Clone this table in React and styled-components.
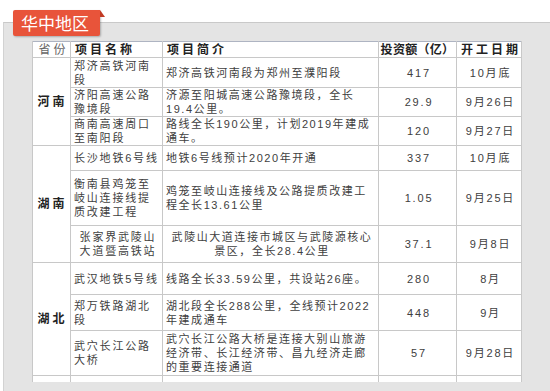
import React from 'react';
import styled, { createGlobalStyle } from 'styled-components';

const GlobalStyle = createGlobalStyle`
    html, body {
        margin: 0;
        padding: 0;
        background: #fff;
    }
    body {
        font-family: "Liberation Sans", "Noto Sans CJK SC", sans-serif;
        color: #333;
    }
`;

const groups = [
    {
        province: '河南',
        rows: [
            { name: '郑济高铁河南段', desc: '郑济高铁河南段为郑州至濮阳段', money: '417', date: '10月底', h: 30 },
            { name: '济阳高速公路豫境段', desc: '济源至阳城高速公路豫境段，全长19.4公里。', money: '29.9', date: '9月26日', h: 29 },
            { name: '商南高速周口至南阳段', desc: '路线全长190公里，计划2019年建成通车。', money: '120', date: '9月27日', h: 29 },
        ],
    },
    {
        province: '湖南',
        rows: [
            { name: '长沙地铁6号线', desc: '地铁6号线预计2020年开通', money: '337', date: '10月底', h: 25 },
            { name: '衡南县鸡笼至岐山连接线提质改建工程', desc: '鸡笼至岐山连接线及公路提质改建工程全长13.61公里', money: '1.05', date: '9月25日', h: 55 },
            { name: '张家界武陵山大道暨高铁站', desc: '武陵山大道连接市城区与武陵源核心景区，全长28.4公里', money: '37.1', date: '9月8日', h: 37, center: true },
        ],
    },
    {
        province: '湖北',
        rows: [
            { name: '武汉地铁5号线', desc: '线路全长33.59公里，共设站26座。', money: '280', date: '8月', h: 32 },
            { name: '郑万铁路湖北段', desc: '湖北段全长288公里，全线预计2022年建成通车', money: '448', date: '9月', h: 36 },
            { name: '武穴长江公路大桥', desc: '武穴长江公路大桥是连接大别山旅游经济带、长江经济带、昌九经济走廊的重要连接通道', money: '57', date: '9月28日', h: 45 },
        ],
    },
];

export default function App() {
    return (
        <Page>
            <GlobalStyle />
            <Panel>
                <Tab>华中地区</Tab>
                <Table>
                    <colgroup>
                        <col style={{ width: 38 }} />
                        <col style={{ width: 92 }} />
                        <col style={{ width: 216 }} />
                        <col style={{ width: 78 }} />
                        <col style={{ width: 65 }} />
                    </colgroup>
                    <thead>
                        <tr>
                            <Head $light $align="center">省份</Head>
                            <Head>项目名称</Head>
                            <Head>项目简介</Head>
                            <Head $align="center" $tight>投资额（亿）</Head>
                            <Head $align="center">开工日期</Head>
                        </tr>
                    </thead>
                    <tbody>
                        {groups.map((g) =>
                            g.rows.map((r, i) => (
                                <tr key={r.name} style={{ height: r.h }}>
                                    {i === 0 && <Province rowSpan={g.rows.length}>{g.province}</Province>}
                                    <Cell $center={r.center}>{r.name}</Cell>
                                    <Cell $center={r.center} $desc>{r.desc}</Cell>
                                    <Cell $center>{r.money}</Cell>
                                    <Cell $center>{r.date}</Cell>
                                </tr>
                            ))
                        )}
                        <CutRow>
                            <td /><td /><td /><td /><td />
                        </CutRow>
                    </tbody>
                </Table>
            </Panel>
        </Page>
    );
}

const Page = styled.div`
    width: 550px;
    height: 391px;
    overflow: hidden;
    padding-top: 22px;
    box-sizing: border-box;
`;

const Panel = styled.div`
    position: relative;
    margin-left: 3px;
    height: 369px;
    background: #e4e4e4;
    border-top: 1px solid #c9c9c9;
    border-left: 1px solid #d2d2d2;
    padding: 18px 0 0 28px;
    box-sizing: border-box;
`;

const Tab = styled.div`
    position: absolute;
    left: 9px;
    top: -13px;
    width: 87px;
    height: 26px;
    background: #e8543a;
    color: #fff;
    font-family: "Noto Sans CJK SC", sans-serif;
    font-size: 17px;
    line-height: 26px;
    padding-left: 8px;
    box-sizing: border-box;
    border-radius: 2px 0 2px 2px;
    box-shadow: 1px 1px 2px rgba(0, 0, 0, 0.25);

    &::after {
        content: '';
        position: absolute;
        right: -5px;
        top: 0;
        border-bottom: 7px solid #c13a24;
        border-right: 5px solid transparent;
    }
`;

const Table = styled.table`
    width: 489px;
    table-layout: fixed;
    border-collapse: collapse;
    background: #fff;
    font-size: 11px;
    letter-spacing: 1.8px;
    line-height: 14px;
    color: #404040;
    border-top: 1px solid #aeb4c2;
`;

const Head = styled.th`
    height: 15px;
    padding: 0 0 0 4px;
    font-size: 12px;
    font-weight: ${(p) => (p.$light ? 400 : 700)};
    color: ${(p) => (p.$light ? '#666' : '#222')};
    text-align: ${(p) => p.$align || 'left'};
    border: 1px solid #c8c8c8;
    border-top: none;
    white-space: nowrap;
    letter-spacing: ${(p) => (p.$tight ? '0.3px' : '3px')};
    padding-left: ${(p) => (p.$tight ? '0' : '4px')};
`;

const Province = styled.td`
    font-size: 12px;
    font-weight: 700;
    color: #222;
    text-align: center;
    letter-spacing: 3px;
    padding-left: 3px;
    border: 1px solid #c8c8c8;
`;

const Cell = styled.td`
    padding: 0 0 0 3px;
    text-align: ${(p) => (p.$center ? 'center' : 'left')};
    letter-spacing: ${(p) => (p.$desc ? '1.55px' : '1.8px')};
    border: 1px solid #c8c8c8;
    vertical-align: middle;
`;

const CutRow = styled.tr`
    height: 6px;

    td {
        border-left: 1px solid #c8c8c8;
        border-right: 1px solid #c8c8c8;
    }
`;
